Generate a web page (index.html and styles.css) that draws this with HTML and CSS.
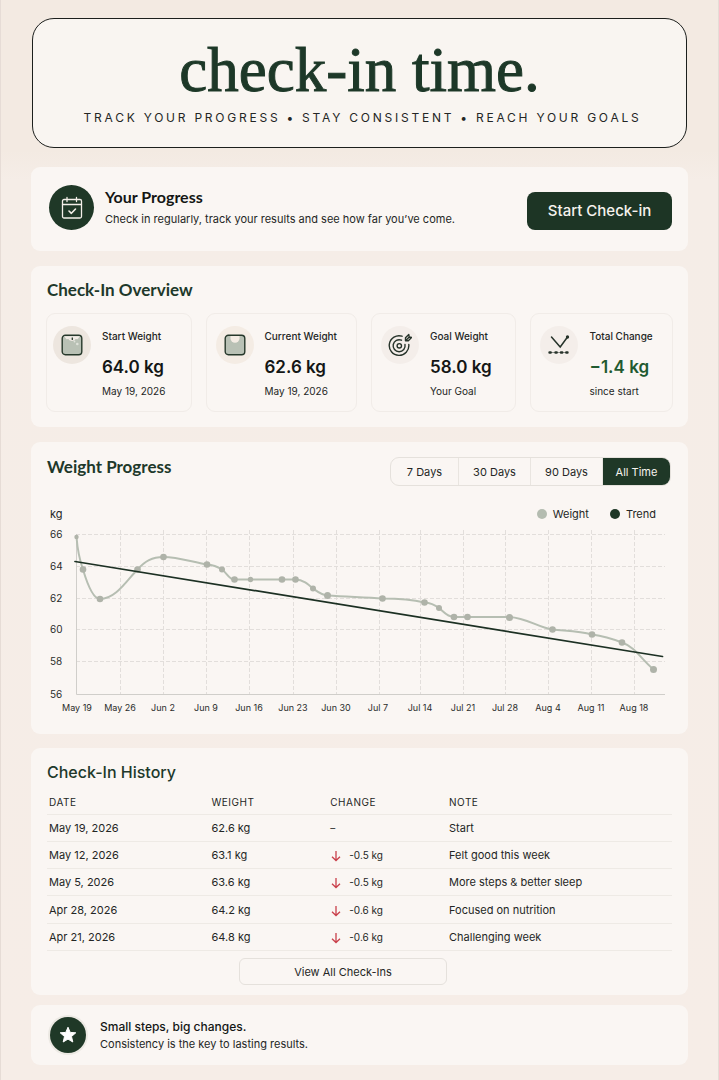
FILE: index.html
```html
<!DOCTYPE html>
<html lang="en">
<head>
    <meta charset="UTF-8">
    <meta name="viewport" content="width=device-width, initial-scale=1.0">
    <title>check-in time.</title>
    <link rel="stylesheet" href="styles.css">
</head>
<body>
<main class="page">
    <header class="hero">
        <h1>check-in time.</h1>
        <p>TRACK YOUR PROGRESS • STAY CONSISTENT • REACH YOUR GOALS</p>
    </header>

    <section class="card progress">
        <span class="badge">
            <svg width="22" height="24" viewBox="0 0 22 24" fill="none" stroke="#f4efe9" stroke-width="1.3" stroke-linecap="round" stroke-linejoin="round">
                <rect x="1.5" y="3.5" width="19" height="18.5" rx="1.5"/>
                <path d="M1.5 8.5h19M6 1.5v4M15.5 1.5v4"/>
                <path d="M8 15l2.4 2.3L14.5 13" stroke-width="1.6"/>
            </svg>
        </span>
        <div class="progress-text">
            <h2>Your Progress</h2>
            <p>Check in regularly, track your results and see how far you’ve come.</p>
        </div>
        <button type="button" class="primary">Start Check-in</button>
    </section>

    <section class="card overview">
        <h2 class="title">Check-In Overview</h2>
        <div class="stats">
            <div class="stat">
                <span class="stat-icon tan">
                    <svg width="22" height="22" viewBox="0 0 22 22">
                        <rect x="1.2" y="1.2" width="19.6" height="19.6" rx="3.2" fill="#b9c1b5" stroke="#26382b" stroke-width="1.4"/>
                        <path d="M3 2.2h16l-2.6 3.1q-5.4-1.6-10.8 0z" fill="#f2ece6"/>
                        <path d="M7 4.6a4.2 3.3 0 0 0 8 0" fill="#f2ece6"/>
                        <path d="M11.3 3.5v2.6" stroke="#26382b" stroke-width="1.3"/>
                        <circle cx="16.3" cy="10" r="1.3" fill="#dfe2da"/>
                        <circle cx="13.5" cy="7.5" r="0.9" fill="#dfe2da"/>
                    </svg>
                </span>
                <div class="stat-body">
                    <span class="label">Start Weight</span>
                    <strong>64.0 kg</strong>
                    <small>May 19, 2026</small>
                </div>
            </div>
            <div class="stat">
                <span class="stat-icon">
                    <svg width="22" height="22" viewBox="0 0 22 22">
                        <rect x="1.2" y="1.2" width="19.6" height="19.6" rx="3.2" fill="#b9c1b5" stroke="#26382b" stroke-width="1.4"/>
                        <path d="M6.5 2h9v2.5a4.5 4.2 0 0 1-9 0z" fill="#f4ece4"/>
                    </svg>
                </span>
                <div class="stat-body">
                    <span class="label">Current Weight</span>
                    <strong>62.6 kg</strong>
                    <small>May 19, 2026</small>
                </div>
            </div>
            <div class="stat">
                <span class="stat-icon pale">
                    <svg width="24" height="24" viewBox="0 0 24 24" fill="none" stroke="#26332a" stroke-width="1.4" stroke-linecap="round" stroke-linejoin="round">
                        <path d="M14 3.2A9.8 9.8 0 1 0 20.8 11.5"/>
                        <path d="M13.5 7.2A6 6 0 1 0 17 11.5"/>
                        <circle cx="11.3" cy="12.8" r="2.2"/>
                        <path d="M17.5 7.8V4.8L20.8 1.500l.4 2.500 2.400.4-3.300 3.400zl3-3"/>
                    </svg>
                </span>
                <div class="stat-body">
                    <span class="label">Goal Weight</span>
                    <strong>58.0 kg</strong>
                    <small>Your Goal</small>
                </div>
            </div>
            <div class="stat">
                <span class="stat-icon pale">
                    <svg width="24" height="24" viewBox="0 0 24 24" fill="none" stroke="#26332a" stroke-width="1.5" stroke-linecap="round">
                        <path d="M4.5 4l8.7 10L20.5 4"/>
                        <circle cx="20.5" cy="4" r="0.9" fill="#26332a"/>
                        <path d="M2.5 19.5h1.2M8.5 19.5h1.2M14 19.5h1.2M19.3 19.5h1.2" stroke-width="2.4"/>
                        <path d="M2.5 19.5h18" stroke-width="0.5"/>
                    </svg>
                </span>
                <div class="stat-body">
                    <span class="label">Total Change</span>
                    <strong class="down">−1.4 kg</strong>
                    <small>since start</small>
                </div>
            </div>
        </div>
    </section>

    <section class="card chart-card">
        <div class="chart-head">
            <h2 class="title">Weight Progress</h2>
            <div class="ranges">
                <button type="button">7 Days</button>
                <button type="button">30 Days</button>
                <button type="button">90 Days</button>
                <button type="button" class="active">All Time</button>
            </div>
        </div>
        <div class="legend">
            <span class="unit">kg</span>
            <span class="key"><i class="dot"></i>Weight</span>
            <span class="key"><i class="dot dark"></i>Trend</span>
        </div>
        <svg class="chart" viewBox="0 0 625 190" role="img" aria-label="Weight Progress">
            <g class="grid">
                <path d="M29 9.5H618M29 41.5H618M29 73.5H618M29 104.5H618M29 136.5H618"/>
                <path d="M73.5 5V169M116.5 5V169M159.5 5V169M202.5 5V169M246.5 5V169M289.5 5V169M332.5 5V169M373.5 5V169M416.5 5V169M458.5 5V169M501.5 5V169M544.5 5V169M587.5 5V169"/>
            </g>
            <path class="axis" d="M29.5 9V169.5H618"/>
            <g class="y-labels">
                <text x="3" y="13">66</text>
                <text x="3" y="45">64</text>
                <text x="3" y="77">62</text>
                <text x="3" y="108">60</text>
                <text x="3" y="140">58</text>
                <text x="3" y="173">56</text>
            </g>
            <g class="x-labels">
                <text x="30" y="186">May 19</text>
                <text x="73" y="186">May 26</text>
                <text x="116" y="186">Jun 2</text>
                <text x="159" y="186">Jun 9</text>
                <text x="202" y="186">Jun 16</text>
                <text x="246" y="186">Jun 23</text>
                <text x="289" y="186">Jun 30</text>
                <text x="331" y="186">Jul 7</text>
                <text x="373" y="186">Jul 14</text>
                <text x="416" y="186">Jul 21</text>
                <text x="458" y="186">Jul 28</text>
                <text x="501" y="186">Aug 4</text>
                <text x="544" y="186">Aug 11</text>
                <text x="587" y="186">Aug 18</text>
            </g>
            <path class="weight" d="M29.5 12C30.5 25 33 36 36 44.5C40 58 46 74 53 74C69 74 80 55 90.5 44.5C98 36 105 32 116.5 32C131 32 145 37 160 39.5C167 40 171 42 175 44.5C180 48 182 54.5 187.5 54.5H248.5C256 54.5 261 59 266 63.5C271 67 275 70 280.5 70.5C300 72 318 72 335.5 73.5C350 73.5 365 74.5 377.5 77.5C384 78 388 80 392 83C397 87 400 92 407 92H462.5C480 93 490 102 505.5 104.5C520 106 532 106 545 109.5C556 111 566 114 575 117.5C588 122 594 134 606.5 144.5"/>
            <g class="points">
                <circle cx="29.5" cy="12" r="2.2"/>
                <circle cx="36" cy="44.5" r="3.3"/>
                <circle cx="53" cy="74" r="3.3"/>
                <circle cx="90.5" cy="44.5" r="3.3"/>
                <circle cx="116.5" cy="32" r="3.3"/>
                <circle cx="160" cy="39.5" r="3.3"/>
                <circle cx="175" cy="44.5" r="3"/>
                <circle cx="187.5" cy="54.5" r="3.3"/>
                <circle cx="203.5" cy="54.5" r="2.7"/>
                <circle cx="235" cy="54.5" r="3.3"/>
                <circle cx="248.5" cy="54.5" r="3.3"/>
                <circle cx="266" cy="63.5" r="3"/>
                <circle cx="280.5" cy="70.5" r="3.5"/>
                <circle cx="335.5" cy="73.5" r="3.3"/>
                <circle cx="377.5" cy="77.5" r="3.3"/>
                <circle cx="392" cy="83" r="3"/>
                <circle cx="407" cy="92" r="3.3"/>
                <circle cx="420.5" cy="92" r="3.3"/>
                <circle cx="462.5" cy="92.5" r="3.5"/>
                <circle cx="505.5" cy="104.5" r="3.3"/>
                <circle cx="545" cy="109.5" r="3.3"/>
                <circle cx="575" cy="117.5" r="3.3"/>
                <circle cx="606.5" cy="144.5" r="3.5"/>
            </g>
            <path class="trend" d="M28 36.5L615.5 131.5"/>
        </svg>
    </section>

    <section class="card history">
        <h2 class="title sans">Check-In History</h2>
        <table>
            <thead>
            <tr><th>DATE</th><th>WEIGHT</th><th>CHANGE</th><th>NOTE</th></tr>
            </thead>
            <tbody>
            <tr><td>May 19, 2026</td><td>62.6 kg</td><td class="change">–</td><td>Start</td></tr>
            <tr><td>May 12, 2026</td><td>63.1 kg</td><td class="change"><svg class="arrow" viewBox="0 0 12 12"><path d="M6 1v9.5M2 6.8l4 3.7 4-3.7"/></svg>-0.5 kg</td><td>Felt good this week</td></tr>
            <tr><td>May 5, 2026</td><td>63.6 kg</td><td class="change"><svg class="arrow" viewBox="0 0 12 12"><path d="M6 1v9.5M2 6.8l4 3.7 4-3.7"/></svg>-0.5 kg</td><td>More steps &amp; better sleep</td></tr>
            <tr><td>Apr 28, 2026</td><td>64.2 kg</td><td class="change"><svg class="arrow" viewBox="0 0 12 12"><path d="M6 1v9.5M2 6.8l4 3.7 4-3.7"/></svg>-0.6 kg</td><td>Focused on nutrition</td></tr>
            <tr><td>Apr 21, 2026</td><td>64.8 kg</td><td class="change"><svg class="arrow" viewBox="0 0 12 12"><path d="M6 1v9.5M2 6.8l4 3.7 4-3.7"/></svg>-0.6 kg</td><td>Challenging week</td></tr>
            </tbody>
        </table>
        <button type="button" class="view-all">View All Check-Ins</button>
    </section>

    <footer class="card note">
        <span class="badge small">
            <svg width="20" height="20" viewBox="0 0 20 20" fill="#fff" stroke="#fff" stroke-width="1" stroke-linejoin="round">
                <path d="M10 2.2l2.2 5.2 5.6.4-4.3 3.7 1.3 5.5L10 14.1 5.2 17l1.3-5.5L2.2 7.8l5.6-.4z"/>
            </svg>
        </span>
        <div>
            <strong>Small steps, big changes.</strong>
            <p>Consistency is the key to lasting results.</p>
        </div>
    </footer>
</main>
</body>
</html>
```

FILE: styles.css
```css
* {
    box-sizing: border-box;
}

body {
    margin: 0;
    font-family: Inter, "Liberation Sans", sans-serif;
    font-size: 11px;
    line-height: 16px;
    color: #242625;
    background-color: #f5ede6;
}

h1, h2, p {
    margin: 0;
}

button {
    font-family: inherit;
    cursor: pointer;
}

.page {
    min-height: 100vh;
    padding: 18px 30px 15px;
    border: solid #e6dcd6;
    border-width: 0 1px;
    background: linear-gradient(#f3eae2 0, #f3eae2 150px, #f5ede7 180px, #f6ede7 100%);
}

.hero {
    height: 130px;
    margin: 0 1px 19px;
    padding-top: 17px;
    border: 1px solid #1c1f1d;
    border-radius: 22px;
    background-color: #f9f5f1;
    text-align: center;
}

.hero h1 {
    font-family: "Liberation Serif", serif;
    font-size: 63px;
    font-weight: normal;
    line-height: 68px;
    color: #1d3828;
    -webkit-text-stroke: 1px #1d3828;
}

.hero p {
    margin-top: 6px;
    padding-left: 6px;
    font-size: 12px;
    letter-spacing: 0.23em;
}

.card {
    border-radius: 9px;
    background-color: #faf6f3;
    padding: 0 15px;
    margin-bottom: 15px;
}

.progress {
    display: flex;
    align-items: center;
    height: 84px;
    padding: 0 16px 3px 18px;
}

.badge {
    display: flex;
    flex: none;
    align-items: center;
    justify-content: center;
    width: 45px;
    height: 45px;
    border-radius: 50%;
    background-color: #1f3827;
}

.badge.small {
    width: 36px;
    height: 36px;
    box-shadow: 0 0 0 2px #ece9e3;
}

.progress-text {
    flex: 1;
    padding: 0 0 3px 11px;
}

.progress-text h2 {
    margin-bottom: 3px;
    font-family: Lato, sans-serif;
    font-size: 16px;
    line-height: 22px;
    color: #141615;
}

.primary {
    width: 145px;
    height: 38px;
    margin-top: 6px;
    padding: 0;
    border: none;
    border-radius: 8px;
    background-color: #1d3525;
    font-size: 15px;
    font-weight: 500;
    color: #f6f3ee;
}

.title {
    font-family: Lato, sans-serif;
    font-size: 17px;
    line-height: 20px;
    color: #20382a;
}

.title.sans {
    font-family: Inter, sans-serif;
    font-size: 16px;
    font-weight: 500;
}

.overview {
    padding-top: 14px;
    padding-bottom: 15px;
}

.overview .title {
    padding-left: 1px;
}

.stats {
    display: grid;
    grid-template-columns: 146fr 152fr 146fr 143fr;
    gap: 14px;
    margin-top: 13px;
}

.stat {
    display: flex;
    gap: 11px;
    padding: 12px 0 13px 6px;
    border: 1px solid #f1ece8;
    border-radius: 9px;
    white-space: nowrap;
}

.stat + .stat {
    padding-left: 9px;
}

.stat-icon {
    display: flex;
    flex: none;
    align-items: center;
    justify-content: center;
    width: 38px;
    height: 38px;
    border-radius: 50%;
    background-color: #f4ece4;
}

.stat-icon.tan {
    background-color: #ede6df;
}

.stat-icon.pale {
    background-color: #f4eeea;
}

.stat-body {
    display: flex;
    flex-direction: column;
}

.stat .label {
    font-size: 10px;
    font-weight: 500;
    line-height: 20px;
}

.stat strong {
    margin: 6px 0 2px;
    font-size: 17px;
    font-weight: 600;
    line-height: 30px;
    color: #141615;
}

.stat strong.down {
    color: #1f5a30;
}

.stat small {
    font-size: 10px;
    line-height: 14px;
}

.chart-card {
    padding: 15px 16px 19px;
    margin-bottom: 14px;
}

.chart-head {
    display: flex;
    justify-content: space-between;
    align-items: flex-start;
    padding-right: 1px;
}

.ranges {
    display: grid;
    grid-template-columns: 68px 72px 72px 67px;
    height: 29px;
    border: 1px solid #e5e1dc;
    border-radius: 9px;
    overflow: hidden;
}

.ranges button {
    padding: 0;
    border: none;
    border-right: 1px solid #e9e5e0;
    background: none;
    font-size: 11px;
    color: #242625;
}

.ranges button.active {
    border: none;
    background-color: #1f3827;
    color: #f6f3ee;
}

.legend {
    display: flex;
    align-items: center;
    justify-content: flex-end;
    gap: 21px;
    margin: 20px 16px 3px 3px;
}

.legend .unit {
    margin-right: auto;
}

.key {
    display: flex;
    align-items: center;
    gap: 6px;
}

.dot {
    width: 10px;
    height: 10px;
    border-radius: 50%;
    background-color: #b4bcb0;
}

.dot.dark {
    background-color: #1f3827;
}

.chart {
    display: block;
    width: 100%;
}

.grid path {
    fill: none;
    stroke: #e2dedb;
    stroke-width: 1;
    stroke-dasharray: 4 2;
}

.axis {
    fill: none;
    stroke: #d0ceca;
}

.chart text {
    font-size: 10px;
    fill: #2b2d2c;
}

.chart .x-labels text {
    font-size: 9px;
    text-anchor: middle;
}

.weight {
    fill: none;
    stroke: #b6beb2;
    stroke-width: 2;
}

.points circle {
    fill: #afb3a9;
}

.trend {
    stroke: #1c3023;
    stroke-width: 1.7;
    stroke-linecap: round;
}

.history {
    padding: 14px 16px 10px;
    margin-bottom: 10px;
}

.history table {
    width: 100%;
    height: 160px;
    margin-top: 9px;
    border-collapse: collapse;
    table-layout: fixed;
}

.history th,
.history td {
    padding: 0 0 0 2px;
    border-bottom: 1px solid #eeeae5;
    text-align: left;
}

.history th {
    height: 23px;
    font-size: 10px;
    font-weight: normal;
    letter-spacing: 0.05em;
}

.history th:nth-child(1) {
    width: 26%;
}

.history th:nth-child(2),
.history th:nth-child(3) {
    width: 19%;
}

.history td.change {
    font-size: 10px;
}

.arrow {
    width: 12px;
    height: 12px;
    margin-right: 7px;
    vertical-align: -3px;
    fill: none;
    stroke: #c9404b;
    stroke-width: 1.3;
}

.view-all {
    display: block;
    width: 208px;
    height: 27px;
    margin: 7px 0 0 192px;
    border: 1px solid #e5e1dc;
    border-radius: 6px;
    background: none;
    font-size: 11px;
    color: #242625;
}

.note {
    display: flex;
    align-items: center;
    gap: 14px;
    height: 60px;
    padding: 0 19px;
    margin-bottom: 0;
    line-height: 17px;
}

.note strong {
    font-size: 12px;
    font-weight: 500;
    color: #141615;
}
```
